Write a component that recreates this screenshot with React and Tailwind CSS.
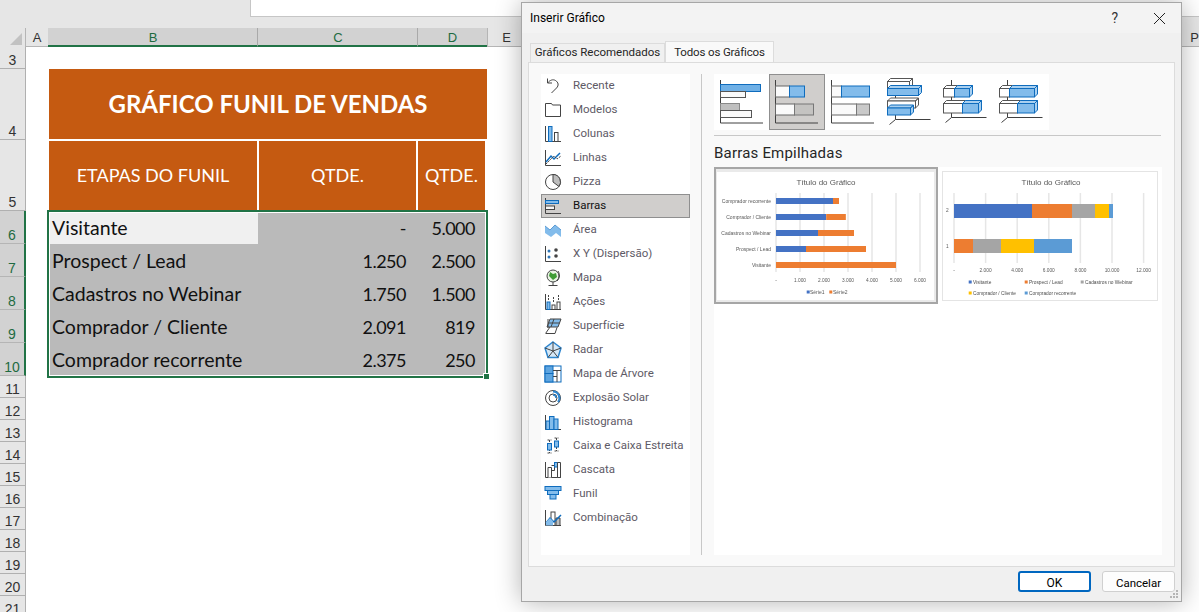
import React from 'react';

const BLUE = '#83bceb';
const EDGE = '#0f6cbd';
const DARK = '#444444';

const rows = [
  { label: 'Visitante', c: '-', d: '5.000', h: 'h-[31px] leading-[30px]' },
  { label: 'Prospect / Lead', c: '1.250', d: '2.500', h: 'h-[33px] leading-[34px]' },
  { label: 'Cadastros no Webinar', c: '1.750', d: '1.500', h: 'h-[33px] leading-[34px]' },
  { label: 'Comprador / Cliente', c: '2.091', d: '819', h: 'h-[33px] leading-[34px]' },
  { label: 'Comprador recorrente', c: '2.375', d: '250', h: 'h-[32px] leading-[34px]' },
];

const rowHeads = [
  { n: 3, h: 'h-[22px]' },
  { n: 4, h: 'h-[71px]' },
  { n: 5, h: 'h-[71px]' },
  { n: 6, h: 'h-[33px]', on: true },
  { n: 7, h: 'h-[33px]', on: true },
  { n: 8, h: 'h-[33px]', on: true },
  { n: 9, h: 'h-[33px]', on: true },
  { n: 10, h: 'h-[33px]', on: true },
  { n: 11, h: 'h-[22px]' },
  { n: 12, h: 'h-[22px]' },
  { n: 13, h: 'h-[22px]' },
  { n: 14, h: 'h-[22px]' },
  { n: 15, h: 'h-[22px]' },
  { n: 16, h: 'h-[22px]' },
  { n: 17, h: 'h-[22px]' },
  { n: 18, h: 'h-[22px]' },
  { n: 19, h: 'h-[22px]' },
  { n: 20, h: 'h-[22px]' },
  { n: 21, h: 'h-[22px]' },
];

const Ico = ({ children }) => (
  <svg width="18" height="18" viewBox="0 0 18 18" fill="none" strokeWidth="1" className="shrink-0">
    {children}
  </svg>
);

const Axis = () => <path d="M1.5 1v15.5H17" stroke={DARK} />;

const icons = {
  Recente: (
    <Ico>
      <path d="M3.5 1.5v4.5h4.500M3.5 6C6 3 9 2 11.5 3.5c3 1.800 3.500 5 1 7.500L7.500 16" stroke={DARK} />
    </Ico>
  ),
  Modelos: (
    <Ico>
      <path d="M1.500 15.500v-13h6l1 1.500h8v11.500z" stroke={DARK} />
    </Ico>
  ),
  Colunas: (
    <Ico>
      <Axis />
      <rect x="4.500" y="1.500" width="3.500" height="15" fill={BLUE} stroke={EDGE} />
      <rect x="10.500" y="7.500" width="3.500" height="9" fill="#fff" stroke={DARK} />
    </Ico>
  ),
  Linhas: (
    <Ico>
      <Axis />
      <path d="M2 13l5-6 3 3 6-6" stroke={EDGE} strokeWidth="1.500" />
      <path d="M2 15l5-5 3-3 3 3 4-3" stroke={DARK} strokeDasharray="2 1" />
    </Ico>
  ),
  Pizza: (
    <Ico>
      <circle cx="9" cy="9" r="7.500" fill="#fff" stroke={DARK} />
      <path d="M9 9V1.500A7.500 7.500 0 0 1 15 13.500z" fill="#bdbdbd" stroke={DARK} />
    </Ico>
  ),
  Barras: (
    <Ico>
      <path d="M1.500 1v15.500H17" stroke={DARK} />
      <rect x="1.500" y="3.500" width="13" height="3" fill={BLUE} stroke={EDGE} />
      <rect x="1.500" y="9" width="9" height="3.500" fill="#f5f5f5" stroke={DARK} />
    </Ico>
  ),
  Área: (
    <Ico>
      <path d="M1 5l5 4 5-5 6 5v7l-5-4-5 4-6-4z" fill={BLUE} />
      <path d="M1 5l5 4 5-5 6 5" stroke="#5b9bd5" />
    </Ico>
  ),
  'X Y (Dispersão)': (
    <Ico>
      <Axis />
      <circle cx="5" cy="6" r="1.500" fill="#2e75b6" />
      <circle cx="12" cy="5" r="1.800" fill={DARK} />
      <circle cx="5" cy="12" r="1.500" fill="#2e75b6" />
      <circle cx="12" cy="11" r="1.800" fill={DARK} />
    </Ico>
  ),
  Mapa: (
    <Ico>
      <circle cx="9" cy="7" r="6" fill="#e9f3e4" stroke={DARK} />
      <path d="M6 3l3 2 3-1 1 4-4 3-2-2-2-2z" fill="#3f9c35" />
      <path d="M9 13v3M4.500 16.500h9M14 2c2 3 2 7-1 10" stroke={DARK} />
    </Ico>
  ),
  Ações: (
    <Ico>
      <Axis />
      <rect x="3" y="9" width="3" height="7.500" fill={BLUE} stroke={EDGE} />
      <rect x="8" y="12" width="3" height="4.500" fill="#fff" stroke={DARK} />
      <rect x="13" y="9" width="3" height="7.500" fill="#fff" stroke={DARK} />
      <path d="M4.500 2v5M9.500 4v6M14.500 2v5" stroke={DARK} strokeDasharray="2 1" />
    </Ico>
  ),
  Superfície: (
    <Ico>
      <path d="M6 2h11l-3 8H3z" fill={BLUE} stroke={DARK} />
      <path d="M10 2l-3 8M4.500 6h11M1.500 16.500 6 10M4 2v9" stroke={DARK} />
      <path d="M2 16.500h9l2-6" stroke={DARK} />
    </Ico>
  ),
  Radar: (
    <Ico>
      <path d="M9 1l8 6-3 9.500H4L1 7z" fill="#d5e8f7" stroke="#2e86cf" strokeWidth="1.500" />
      <path d="M9 1v9M1 7l8 3 8-3M4 16.500 9 10l5 6.500" stroke={DARK} />
    </Ico>
  ),
  'Mapa de Árvore': (
    <Ico>
      <rect x="1" y="1" width="16" height="16" fill="#fff" stroke={EDGE} />
      <rect x="1" y="1" width="8" height="7.500" fill="#5ea5e0" stroke={EDGE} />
      <rect x="1" y="8.500" width="8" height="8.500" fill="#5ea5e0" stroke={EDGE} />
      <path d="M9 5.500h8M13 5.500V17M9 11.500h4" stroke={DARK} />
    </Ico>
  ),
  'Explosão Solar': (
    <Ico>
      <circle cx="9" cy="9" r="7.500" fill="#fff" stroke={DARK} />
      <path d="M9 2.500a6.500 6.500 0 0 1 5 10.500" stroke="#2e86cf" strokeWidth="2" />
      <circle cx="9" cy="9" r="4" stroke={DARK} />
      <path d="M9 6a3 3 0 0 1 3 3" stroke="#2e86cf" strokeWidth="1.500" />
    </Ico>
  ),
  Histograma: (
    <Ico>
      <path d="M1.500 2v14.500H17" stroke={DARK} />
      <rect x="2" y="8" width="3.500" height="8.500" fill={BLUE} stroke={EDGE} />
      <rect x="5.500" y="3.500" width="4.500" height="13" fill={BLUE} stroke={EDGE} />
      <rect x="10" y="6" width="4" height="10.500" fill={BLUE} stroke={EDGE} />
    </Ico>
  ),
  'Caixa e Caixa Estreita': (
    <Ico>
      <path d="M5.500 3v13M12.500 1v13M3.500 3h4M3.500 16h4M10.500 1h4M10.500 14h4" stroke={DARK} strokeDasharray="2 1" />
      <rect x="3.500" y="6.500" width="4" height="6.500" fill={BLUE} stroke={EDGE} />
      <rect x="10.500" y="4" width="4" height="6" fill={BLUE} stroke={EDGE} />
    </Ico>
  ),
  Cascata: (
    <Ico>
      <path d="M1.500 1v15.500H17" stroke={DARK} />
      <path d="M4 16.500v-10h3.500v10M7.500 4.500h3v5h-3" stroke={DARK} fill="#fff" />
      <rect x="10.500" y="1.500" width="3" height="4.500" fill={BLUE} stroke={EDGE} />
      <path d="M13.500 1.500H16.500v15h-3z" fill="#fff" stroke={DARK} />
    </Ico>
  ),
  Funil: (
    <Ico>
      <rect x="1" y="1.500" width="16" height="4" fill={BLUE} stroke={EDGE} />
      <rect x="3.500" y="5.500" width="11" height="4" fill={BLUE} stroke={EDGE} />
      <rect x="6" y="9.500" width="6" height="4.500" fill={BLUE} stroke={EDGE} />
    </Ico>
  ),
  Combinação: (
    <Ico>
      <Axis />
      <rect x="7" y="3" width="4" height="13.500" fill="#fff" stroke={DARK} />
      <path d="M12 9h4v7.500h-4z" fill="#bdbdbd" stroke={DARK} />
      <path d="M2 14l4-5 4 4 7-7" stroke={EDGE} strokeWidth="1.500" />
      <path d="M2 15V13l4-4 3 3v4.500H2z" fill={BLUE} />
    </Ico>
  ),
};

const Bar3D = ({ x, y, w, h, fill, stroke }) => (
  <g stroke={stroke} strokeWidth="1">
    <path d={`M${x} ${y}l3-3h${w}l-3 3zM${x + w} ${y}l3-3v${h}l-3 3z`} fill={fill === '#fff' ? '#fff' : '#a9d0f0'} />
    <rect x={x} y={y} width={w} height={h} fill={fill} />
  </g>
);

const Flat = ({ bars }) => (
  <>
    <path d="M6.500 6v43H49" stroke="#404040" strokeWidth="1" fill="none" />
    {bars.map((b, i) => (
      <rect key={i} x={b[0]} y={b[1]} width={b[2]} height={b[3]} fill={b[4]} stroke={b[5]} strokeWidth="1" />
    ))}
  </>
);

const Floor = ({ x, top, bottom }) => (
  <path d={`M${x} ${top}V${bottom}M${x} ${bottom}H49.500M${x} ${bottom}l-6 5`} stroke="#404040" fill="none" />
);

const typeTiles = [
  <Flat
    key="a"
    bars={[
      [6.5, 10.5, 40, 7, '#6fb0e6', EDGE],
      [6.5, 17.5, 25, 6, '#fafafa', '#555'],
      [6.5, 29.5, 19, 7, '#bfbfbf', '#888'],
      [6.5, 36.5, 31, 7, '#fafafa', '#555'],
    ]}
  />,
  <Flat
    key="b"
    bars={[
      [6.5, 12, 14, 11, '#fafafa', '#666'],
      [20.5, 12, 15, 11, BLUE, EDGE],
      [6.5, 30, 19, 11, '#fafafa', '#666'],
      [25.5, 30, 19, 11, '#c4c3c1', '#777'],
    ]}
  />,
  <Flat
    key="c"
    bars={[
      [6.5, 12, 10, 11, '#fafafa', '#666'],
      [16.5, 12, 28, 11, BLUE, EDGE],
      [6.5, 30, 25, 11, '#fafafa', '#666'],
      [31.5, 30, 13, 11, '#c9c9c9', '#777'],
    ]}
  />,
  <g key="d">
    <Floor x={14.5} top={4} bottom={45.5} />
    <Bar3D x={6.5} y={7.5} w={22} h={6.5} fill="#fff" stroke="#555" />
    <Bar3D x={6.5} y={14.5} w={31} h={7} fill={BLUE} stroke={EDGE} />
    <Bar3D x={6.5} y={27} w={28} h={7} fill="#fff" stroke="#555" />
    <Bar3D x={6.5} y={34} w={23} h={7} fill={BLUE} stroke={EDGE} />
  </g>,
  <g key="e">
    <Floor x={14.5} top={6} bottom={43.5} />
    <Bar3D x={6.5} y={14.5} w={11} h={8.5} fill="#fff" stroke="#555" />
    <Bar3D x={17.5} y={14.5} w={15} h={8.5} fill={BLUE} stroke={EDGE} />
    <Bar3D x={6.5} y={29.5} w={19} h={9.5} fill="#fff" stroke="#555" />
    <Bar3D x={25.5} y={29.5} w={16} h={9.5} fill={BLUE} stroke={EDGE} />
  </g>,
  <g key="f">
    <Floor x={14.5} top={6} bottom={43.5} />
    <Bar3D x={6.5} y={14.5} w={10} h={8.5} fill="#fff" stroke="#555" />
    <Bar3D x={16.5} y={14.5} w={25} h={8.5} fill={BLUE} stroke={EDGE} />
    <Bar3D x={6.5} y={29.5} w={18} h={9.5} fill="#fff" stroke="#555" />
    <Bar3D x={24.5} y={29.5} w={17} h={9.5} fill={BLUE} stroke={EDGE} />
  </g>,
];

const c1 = '#4472c4';
const c2 = '#ed7d31';
const c3 = '#a5a5a5';
const c4 = '#ffc000';
const c5 = '#5b9bd5';

const ThumbA = () => {
  const cats = [
    ['Comprador recorrente', 2375, 250],
    ['Comprador / Cliente', 2091, 819],
    ['Cadastros no Webinar', 1750, 1500],
    ['Prospect / Lead', 1250, 2500],
    ['Visitante', 0, 5000],
  ];
  const ticks = ['-', '1.000', '2.000', '3.000', '4.000', '5.000', '6.000'];
  return (
    <svg width="217" height="128" viewBox="0 0 217 128" className="blur-[0.3px]" style={{ fontFamily: '"Liberation Sans", sans-serif' }}>
      <rect width="217" height="128" fill="#fff" />
      <text x="109" y="12.500" fontSize="8" fill="#595959" textAnchor="middle">Título do Gráfico</text>
      {ticks.map((t, i) => (
        <g key={t}>
          <line x1={59 + i * 24} x2={59 + i * 24} y1="21" y2="100" stroke="#e6e6e6" strokeWidth="1.500" />
          <text x={59 + i * 24} y="110" fontSize="4.800" fill="#595959" textAnchor="middle">{t}</text>
        </g>
      ))}
      {cats.map((c, i) => (
        <g key={c[0]}>
          <text x="54" y={31 + i * 16} fontSize="5" fill="#595959" textAnchor="end">{c[0]}</text>
          <rect x="59" y={26 + i * 16} width={c[1] * 0.024} height="6" fill={c1} />
          <rect x={59 + c[1] * 0.024} y={26 + i * 16} width={c[2] * 0.024} height="6" fill={c2} />
        </g>
      ))}
      <rect x="89.700" y="118.500" height="3" width="3" fill={c1} />
      <text x="93" y="122" fontSize="5" fill="#595959">Série1</text>
      <rect x="112.300" y="118.500" height="3" width="3" fill={c2} />
      <text x="116" y="122" fontSize="5" fill="#595959">Série2</text>
    </svg>
  );
};

const ThumbB = () => {
  const top = [[0, 78, c1], [78, 40, c2], [118, 23, c3], [141, 14, c4], [155, 4, c5]];
  const low = [[0, 19, c2], [19, 28, c3], [47, 33, c4], [80, 38, c5]];
  const ticks = ['-', '2.000', '4.000', '6.000', '8.000', '10.000', '12.000'];
  const legend = [
    [30, 112, c1, 'Visitante'],
    [86, 112, c2, 'Prospect / Lead'],
    [142, 112, c3, 'Cadastros no Webinar'],
    [30, 123, c4, 'Comprador / Cliente'],
    [86, 123, c5, 'Comprador recorrente'],
  ];
  return (
    <svg width="214" height="128" viewBox="0 0 214 128" className="blur-[0.3px]" style={{ fontFamily: '"Liberation Sans", sans-serif' }}>
      <rect width="214" height="128" fill="#fff" />
      <text x="108" y="12.500" fontSize="8" fill="#595959" textAnchor="middle">Título do Gráfico</text>
      {ticks.map((t, i) => (
        <g key={t}>
          <line x1={11 + i * 31.6} x2={11 + i * 31.6} y1="21" y2="91" stroke="#e6e6e6" strokeWidth="1.500" />
          <text x={11 + i * 31.6} y="100" fontSize="4.800" fill="#595959" textAnchor="middle">{t}</text>
        </g>
      ))}
      <text x="3" y="40" fontSize="4.800" fill="#595959">2</text>
      <text x="3" y="76" fontSize="4.800" fill="#595959">1</text>
      {top.map((s) => (
        <rect key={s[2]} x={11 + s[0]} y="32" width={s[1]} height="14" fill={s[2]} />
      ))}
      {low.map((s) => (
        <rect key={s[2]} x={11 + s[0]} y="67" width={s[1]} height="14" fill={s[2]} />
      ))}
      {legend.map((l) => (
        <g key={l[3]}>
          <rect x={l[0] - 4.300} y={l[1] - 3.500} width="3" height="3" fill={l[2]} />
          <text x={l[0]} y={l[1]} fontSize="4.800" fill="#4d4d4d">{l[3]}</text>
        </g>
      ))}
    </svg>
  );
};

function Sheet() {
  return (
    <div className="flex flex-col" style={{ fontFamily: 'Lato, sans-serif' }}>
      <div className="flex h-[28px] bg-[#e6e6e6]">
        <div className="ml-[250px] h-[17px] flex-1 border-b border-l border-[#c6c6c6] bg-white" />
      </div>
      <div className="flex h-[19px] bg-[#e6e6e6] text-[13px] leading-[19px] text-[#333]" style={{ fontFamily: '"Liberation Sans", sans-serif' }}>
        <div className="flex w-[26px] items-end justify-end border-r border-[#b5b5b5] pb-[2px] pr-[3px]">
          <div className="h-0 w-0 border-b-[12px] border-l-[12px] border-b-[#c2c2c2] border-l-transparent" />
        </div>
        <div className="w-[22px] border-b border-[#b5b5b5] text-center">A</div>
        <div className="h-[19px] w-[210px] border-b-2 border-r border-b-[#217346] border-r-[#a9a9a9] bg-[#d2d2d2] pl-[1px] text-center text-[#1e6b41]">B</div>
        <div className="h-[19px] w-[160px] border-b-2 border-r border-b-[#217346] border-r-[#a9a9a9] bg-[#d2d2d2] pl-[1px] text-center text-[#1e6b41]">C</div>
        <div className="h-[19px] w-[69px] border-b-2 border-b-[#217346] bg-[#d2d2d2] text-center text-[#1e6b41]">D</div>
        <div className="h-[19px] w-[38px] border-b border-l border-[#b5b5b5] text-center">E</div>
        <div className="flex-1 border-b border-[#b5b5b5] text-right">P</div>
      </div>
      <div className="flex">
        <div className="flex w-[26px] flex-col text-[14px] leading-[15px] text-[#333]" style={{ fontFamily: '"Liberation Sans", sans-serif' }}>
          {rowHeads.map((r) => (
            <div
              key={r.n}
              className={
                r.on
                  ? `${r.h} flex shrink-0 items-end justify-center border-b border-r-2 border-b-[#b5b5b5] border-r-[#217346] bg-[#d2d2d2] text-[#1e6b41]`
                  : `${r.h} flex shrink-0 items-end justify-center border-b border-r border-[#b0b0b0] bg-[#e6e6e6]`
              }
            >
              {r.n}
            </div>
          ))}
        </div>
        <div className="flex w-[470px] flex-col pl-[23px] pt-[22px]">
          <div className="flex h-[70px] w-[438px] items-center justify-center bg-[#c55a11] text-[24px] font-bold text-white">
            GRÁFICO FUNIL DE VENDAS
          </div>
          <div className="mt-[2px] flex h-[69px] gap-[2px] text-[18px] text-white">
            <div className="flex w-[208px] items-center justify-center bg-[#c55a11]">ETAPAS DO FUNIL</div>
            <div className="flex w-[157px] items-center justify-center bg-[#c55a11]">QTDE.</div>
            <div className="flex w-[67px] items-center justify-center bg-[#c55a11]">QTDE.</div>
          </div>
          <div className="relative -ml-[2px] h-[168px] w-[441px] border-2 border-[#217346] bg-white p-[1px] text-[#111]">
            {rows.map((r, i) => (
              <div key={r.label} className={`${r.h} flex items-start bg-[#bababa] text-[18px] tracking-[-0.5px]`}>
                <div className={i === 0 ? 'h-full w-[208px] bg-[#f0f0f0] pl-[2px] text-[19.5px] tracking-normal' : 'h-full w-[208px] pl-[2px] text-[19.5px] tracking-normal'}>
                  {r.label}
                </div>
                <div className="w-[148px] text-right">{r.c}</div>
                <div className="w-[69px] text-right">{r.d}</div>
              </div>
            ))}
            <div className="absolute -bottom-[4px] -right-[4px] h-[7px] w-[7px] border border-white bg-[#217346]" />
          </div>
        </div>
      </div>
    </div>
  );
}

function InsertChartDialog() {
  const active = 'Barras';
  return (
    <div
      className="absolute left-[521px] top-[2px] flex h-[600px] w-[661px] flex-col border border-[#a6a6a6] bg-[#f0f0f0] text-[11.5px] text-[#262626] shadow-[0_0_24px_rgba(0,0,0,0.3)]"
      style={{ fontFamily: 'Roboto, sans-serif' }}
    >
      <div className="flex h-[30px] shrink-0 items-center justify-between bg-[#f3f3f3] pl-[8px] pr-[15px]">
        <span className="text-[12px] text-black">Inserir Gráfico</span>
        <div className="flex items-center gap-[35px]">
          <span className="text-[14px] text-[#333]">?</span>
          <svg width="13" height="13" viewBox="0 0 13 13" stroke="#222" strokeWidth="1">
            <path d="M1 1l11 11M12 1L1 12" />
          </svg>
        </div>
      </div>
      <div className="flex h-[29px] shrink-0 items-end pl-[8px]">
        <div className="flex h-[19px] w-[135px] items-center justify-center whitespace-nowrap border border-b-0 border-[#dcdcdc] bg-[#f0f0f0]">
          Gráficos Recomendados
        </div>
        <div className="-mb-[1px] flex h-[22px] w-[109px] items-center justify-center whitespace-nowrap border border-b-0 border-[#dcdcdc] bg-[#f9f9f9] tracking-[-0.15px]">
          Todos os Gráficos
        </div>
      </div>
      <div className="mx-[6px] flex h-[505px] shrink-0 border border-[#dcdcdc] bg-[#f9f9f9] pb-[11px] pl-[12px] pr-[10px] pt-[11px]">
        <div className="h-[481px] w-[149px] shrink-0 bg-white">
          {Object.keys(icons).map((name) => (
            <div
              key={name}
              className={
                name === active
                  ? 'flex h-[24px] items-center gap-[11px] border border-[#8f8f8f] bg-[#d0cecc] pl-[2px] text-[#111]'
                  : 'flex h-[24px] items-center gap-[11px] pl-[3px] text-[#5e5a66]'
              }
            >
              {icons[name]}
              <span className="whitespace-nowrap">{name}</span>
            </div>
          ))}
        </div>
        <div className="ml-[11px] h-[481px] w-px shrink-0 bg-[#c8c8c8]" />
        <div className="ml-[12px] flex h-[481px] w-[448px] flex-col">
          <div className="flex h-[56px]">
            {typeTiles.map((t, i) => (
              <div key={i} className={i === 1 ? 'h-[56px] w-[56px] border border-[#8f8f8f] bg-[#d0cecc]' : i === 0 ? 'h-[56px] w-[55px] bg-white' : 'h-[56px] w-[56px] bg-white'}>
                <svg width="56" height="56" viewBox="0 0 56 56" className={i === 1 ? '-ml-[1px] -mt-[1px]' : ''}>
                  {t}
                </svg>
              </div>
            ))}
          </div>
          <div className="mt-[5px] h-px w-[447px] bg-[#c8c8c8]" />
          <div className="h-[31px] pt-[7px] text-[15px] leading-[20px] tracking-[0.2px] text-[#262626]">Barras Empilhadas</div>
          <div className="flex-1 bg-white">
            <div className="flex items-start gap-[4px]">
              <div className="h-[137px] w-[224px] border-2 border-[#a6a6a6] bg-[#eaeaea] pl-[1px] pt-[3px]">
                <ThumbA />
              </div>
              <div className="mt-[4px] border border-[#e4e4e4]">
                <ThumbB />
              </div>
            </div>
          </div>
        </div>
      </div>
      <div className="flex flex-1 items-start justify-end gap-[11px] pr-[6px] pt-[4px]">
        <button className="h-[21px] w-[73px] rounded-[3px] border-2 border-[#0067c0] bg-white pt-[3px] text-[12px] leading-[14px] text-black">OK</button>
        <button className="h-[21px] w-[73px] rounded-[3px] border border-[#d0d0d0] bg-[#fdfdfd] pt-[3px] text-[11.5px] leading-[14px] text-black">Cancelar</button>
      </div>
      <svg width="9" height="9" viewBox="0 0 9 9" fill="#b5b5b5" className="absolute bottom-[2px] right-[2px]">
        <rect x="6" y="0" width="2" height="2" />
        <rect x="3" y="3" width="2" height="2" />
        <rect x="6" y="3" width="2" height="2" />
        <rect x="0" y="6" width="2" height="2" />
        <rect x="3" y="6" width="2" height="2" />
        <rect x="6" y="6" width="2" height="2" />
      </svg>
    </div>
  );
}

export default function App() {
  return (
    <div className="relative h-[612px] w-[1199px] overflow-hidden bg-white">
      <Sheet />
      <InsertChartDialog />
    </div>
  );
}
